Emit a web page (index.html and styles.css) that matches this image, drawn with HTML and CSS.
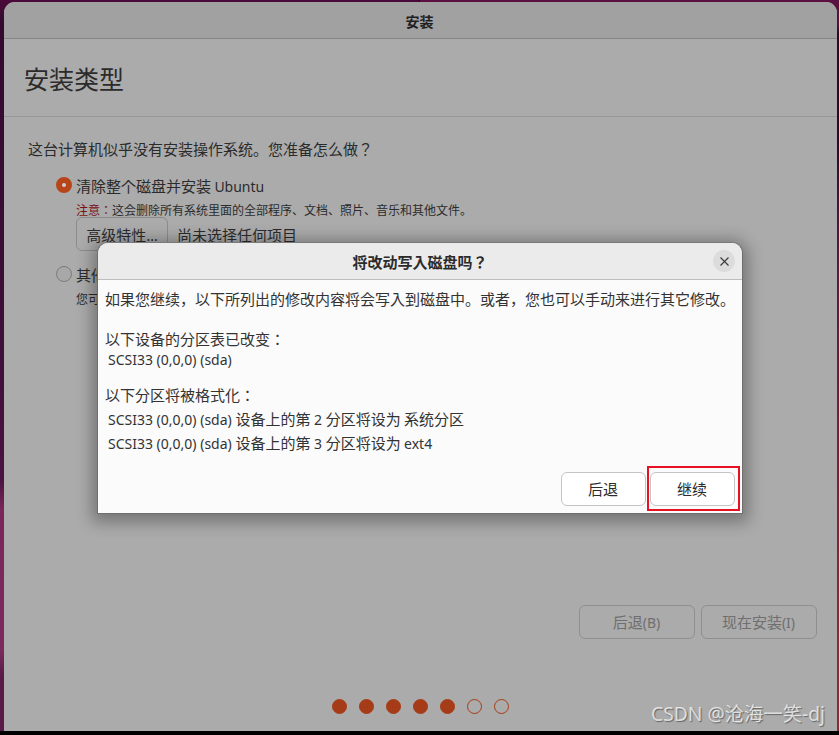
FILE: index.html
```html
<!DOCTYPE html>
<html>
<head>
<meta charset="UTF-8">
<meta name="viewport" content="width=device-width, initial-scale=1.0">
<title>安装</title>
<link rel="stylesheet" href="styles.css">
</head>
<body>
<div class="desktop">
    <div class="window">
        <div class="titlebar">安装</div>
        <div class="page-head"><h1>安装类型</h1></div>
        <div class="content">
            <p class="question">这台计算机似乎没有安装操作系统。您准备怎么做？</p>
            <div class="option">
                <span class="radio radio-on"></span>
                <span class="option-label">清除整个磁盘并安装 <span class="latin">Ubuntu</span></span>
            </div>
            <div class="option-body">
                <p class="note"><span class="note-mark">注意：</span>这会删除所有系统里面的全部程序、文档、照片、音乐和其他文件。</p>
                <div class="advanced">
                    <button type="button" class="btn btn-advanced">高级特性<span class="latin">...</span></button>
                    <span>尚未选择任何项目</span>
                </div>
            </div>
            <div class="option option-other">
                <span class="radio"></span>
                <span class="option-label">其他</span>
            </div>
            <div class="option-body">
                <p class="note note-other">您可</p>
            </div>
            <div class="actions">
                <button type="button" class="btn btn-disabled">后退<span class="latin">(B)</span></button>
                <button type="button" class="btn btn-disabled">现在安装<span class="latin">(I)</span></button>
            </div>
        </div>
        <div class="steps">
            <span class="dot dot-done"></span>
            <span class="dot dot-done"></span>
            <span class="dot dot-done"></span>
            <span class="dot dot-done"></span>
            <span class="dot dot-done"></span>
            <span class="dot"></span>
            <span class="dot"></span>
        </div>
    </div>
</div>
<div class="bottom-strip"></div>

<div class="dialog">
    <div class="dialog-title">
        <span>将改动写入磁盘吗？</span>
        <button type="button" class="dialog-close" aria-label="关闭">
            <svg width="9" height="9" viewBox="0 0 9 9"><path d="M.5.5l8 8M8.5.5l-8 8" stroke="#3a3a3a" stroke-width="1.1" fill="none"/></svg>
        </button>
    </div>
    <div class="dialog-body">
        <p class="dialog-intro">如果您继续，以下所列出的修改内容将会写入到磁盘中。或者，您也可以手动来进行其它修改。</p>
        <p class="dialog-head">以下设备的分区表已改变：</p>
        <p class="dialog-item"><span class="latin">SCSI33 (0,0,0) (sda)</span></p>
        <p class="dialog-head dialog-head-second">以下分区将被格式化：</p>
        <p class="dialog-item"><span class="latin">SCSI33 (0,0,0) (sda) </span>设备上的第<span class="latin"> 2 </span>分区将设为 系统分区</p>
        <p class="dialog-item"><span class="latin">SCSI33 (0,0,0) (sda) </span>设备上的第<span class="latin"> 3 </span>分区将设为 <span class="latin">ext4</span></p>
    </div>
    <div class="dialog-actions">
        <button type="button" class="btn btn-dialog">后退</button>
        <button type="button" class="btn btn-dialog">继续</button>
    </div>
</div>
<div class="highlight"></div>
<div class="watermark">CSDN @沧海一笑-dj</div>
</body>
</html>
```
FILE: styles.css
```css
* {
    box-sizing: border-box;
}
html, body {
    height: 100%;
}
body {
    margin: 0;
    display: flex;
    flex-direction: column;
    overflow: hidden;
    font-family: "Noto Sans CJK JP", "Noto Sans CJK SC", sans-serif;
    font-size: 15px;
    color: #2b2b2b;
    background: #000;
}
p {
    margin: 0;
}
.latin {
    font-family: "Noto Sans", sans-serif;
    font-size: 14px;
}
.desktop {
    flex: 1;
    min-height: 0;
    padding: 2px 2px 0 4px;
    background:
        linear-gradient(to bottom, #4a0a3a 0, #330a2e 24px, #3c0e36 300px, #4a1240 480px, #7a2658 510px, #7c2a5c 650px, #5a1a48 675px) left / 50% 100% no-repeat,
        linear-gradient(to bottom, #5a1040 0, #5a1040 24px, #2a0a28 34px, #2a0a28 140px, #4a1238 200px, #5a1a3c 260px, #7a1c3c 420px, #8a2a38 640px) right / 50% 100% no-repeat;
}
.bottom-strip {
    height: 4px;
    background: #000;
}
.window {
    height: 100%;
    display: flex;
    flex-direction: column;
    background: #ababab;
    border-radius: 11px 11px 0 0;
    overflow: hidden;
}
.titlebar {
    height: 37px;
    display: flex;
    align-items: center;
    justify-content: center;
    padding: 2px 2px 0 0;
    background: #a1a1a1;
    border-bottom: 1px solid #858585;
    font-size: 14px;
    font-weight: 700;
    color: #1f1f1f;
}
.page-head {
    height: 78px;
    display: flex;
    align-items: center;
    padding-left: 20px;
    border-bottom: 1px solid #979797;
}
h1 {
    margin: 0;
    font-size: 25px;
    font-weight: 400;
    color: #2b2b2b;
}
.content {
    flex: 1;
    min-height: 0;
    display: flex;
    flex-direction: column;
    padding: 21px 20px 0 24px;
}
.question {
    line-height: 22px;
}
.option {
    display: flex;
    align-items: center;
    gap: 4px;
    margin: 15px 0 0 28px;
    line-height: 22px;
}
.option-other {
    margin-top: 13px;
}
.radio {
    width: 16px;
    height: 16px;
    margin-bottom: 4px;
    border: 1px solid #7c7c7c;
    border-radius: 50%;
    background: #a8a8a8;
}
.option-other .radio {
    margin-bottom: 2px;
}
.radio-on {
    border: 6px solid #b8451a;
    background: #cfcfcf;
}
.option-body {
    margin-left: 48px;
}
.note {
    margin-top: 5px;
    font-size: 12px;
    line-height: 14px;
}
.note-other {
    margin-top: 6px;
}
.note-mark {
    color: #7a1212;
}
.advanced {
    display: flex;
    align-items: center;
    gap: 9px;
}
.btn {
    font-family: inherit;
    font-size: 15px;
    color: #2b2b2b;
    border-radius: 6px;
    background: transparent;
    border: 1px solid #8c8c8c;
    padding: 0;
}
.btn-advanced {
    width: 92px;
    height: 34px;
    background: #ababab;
}
.actions {
    display: flex;
    justify-content: flex-end;
    gap: 6px;
    margin-top: auto;
}
.btn-disabled {
    width: 116px;
    height: 34px;
    padding: 0 1px 2px 0;
    color: #6f6f6f;
    border-color: #8f8f8f;
}
.steps {
    display: flex;
    justify-content: center;
    gap: 12px;
    height: 92px;
    padding: 60px 0 0 0;
}
.dot {
    width: 15px;
    height: 15px;
    border: 1px solid #a63c17;
    border-radius: 50%;
}
.dot-done {
    background: #a63c17;
}
.dialog {
    position: absolute;
    left: 97px;
    top: 242px;
    width: 646px;
    height: 272px;
    display: flex;
    flex-direction: column;
    background: #fbfbfb;
    border: 1px solid #6e6e6e;
    border-top-color: #7a7a7a;
    border-radius: 11px 11px 0 0;
    box-shadow: 0 3px 16px 5px rgba(0, 0, 0, 0.32);
}
.dialog-title {
    position: relative;
    height: 37px;
    flex: none;
    display: flex;
    align-items: center;
    justify-content: center;
    background: #ebebeb;
    border-bottom: 1px solid #bdbdbd;
    border-radius: 10px 10px 0 0;
    font-weight: 700;
    color: #2b2b2b;
}
.dialog-close {
    position: absolute;
    right: 7px;
    top: 7px;
    width: 22px;
    height: 22px;
    display: flex;
    align-items: center;
    justify-content: center;
    padding: 0;
    border: none;
    border-radius: 50%;
    background: #dcdcdc;
}
.dialog-body {
    flex: 1;
    padding: 8px 0 0 7px;
    line-height: 22px;
    color: #333;
}
.dialog-intro {
    margin-bottom: 20px;
}
.dialog-head {
    line-height: 18px;
}
.dialog-head-second {
    margin: 15px 0 4px;
}
.dialog-item {
    padding-left: 3px;
}
.dialog-item + .dialog-item {
    margin-top: 1px;
}
.dialog-actions {
    display: flex;
    justify-content: flex-end;
    gap: 4px;
    padding: 0 7px 7px 0;
}
.btn-dialog {
    width: 85px;
    height: 34px;
    padding: 0 1px 2px 0;
    background: #fff;
    border-color: #c4c4c4;
}
.highlight {
    position: absolute;
    left: 647px;
    top: 466px;
    width: 93px;
    height: 45px;
    border: 2px solid #e81123;
}
.watermark {
    position: absolute;
    right: 14px;
    top: 702px;
    font-family: "Noto Sans", "Noto Sans CJK SC", sans-serif;
    font-size: 19.3px;
    line-height: 24px;
    color: rgba(255, 255, 255, 0.72);
    text-shadow: 1px 1px 1px rgba(0, 0, 0, 0.4);
}
```
